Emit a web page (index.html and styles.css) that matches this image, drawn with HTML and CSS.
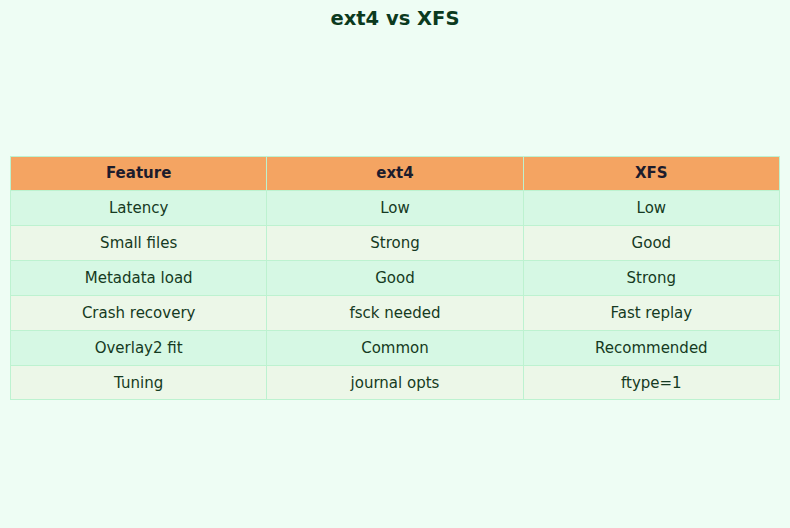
FILE: index.html
```html
<!DOCTYPE html>
<html>
<head>
<meta charset="utf-8">
<link rel="stylesheet" href="styles.css">
</head>
<body>
<div class="page">
  <h1 class="title">ext4 vs XFS</h1>
  <div class="area">
    <table class="cmp">
      <thead>
        <tr><th>Feature</th><th>ext4</th><th>XFS</th></tr>
      </thead>
      <tbody>
        <tr><td>Latency</td><td>Low</td><td>Low</td></tr>
        <tr><td>Small files</td><td>Strong</td><td>Good</td></tr>
        <tr><td>Metadata load</td><td>Good</td><td>Strong</td></tr>
        <tr><td>Crash recovery</td><td>fsck needed</td><td>Fast replay</td></tr>
        <tr><td>Overlay2 fit</td><td>Common</td><td>Recommended</td></tr>
        <tr><td>Tuning</td><td>journal opts</td><td>ftype=1</td></tr>
      </tbody>
    </table>
  </div>
</div>
</body>
</html>
```
FILE: styles.css
```css
html, body {
  margin: 0;
  padding: 0;
  background: #eefdf4;
  font-family: "DejaVu Sans", sans-serif;
}
.page {
  height: 528px;
  box-sizing: border-box;
  padding: 7px 10px 3px;
  display: flex;
  flex-direction: column;
}
.title {
  margin: 0;
  font-size: 19.5px;
  font-weight: bold;
  color: #0b3a1e;
  text-align: center;
  line-height: 24px;
}
.area {
  flex: 1;
  display: flex;
  align-items: center;
}
.cmp {
  width: 100%;
  border-collapse: collapse;
  table-layout: fixed;
  font-size: 15px;
}
.cmp th, .cmp td {
  border: 1px solid #bdf2d0;
  text-align: center;
  height: 33.85px;
  padding: 0;
}
.cmp th {
  background: #f4a462;
  color: #1c1c2c;
  font-weight: bold;
}
.cmp td {
  color: #153a22;
}
.cmp tbody tr:nth-child(odd) td { background: #d6f8e4; }
.cmp tbody tr:nth-child(even) td { background: #ecf7e8; }
```
